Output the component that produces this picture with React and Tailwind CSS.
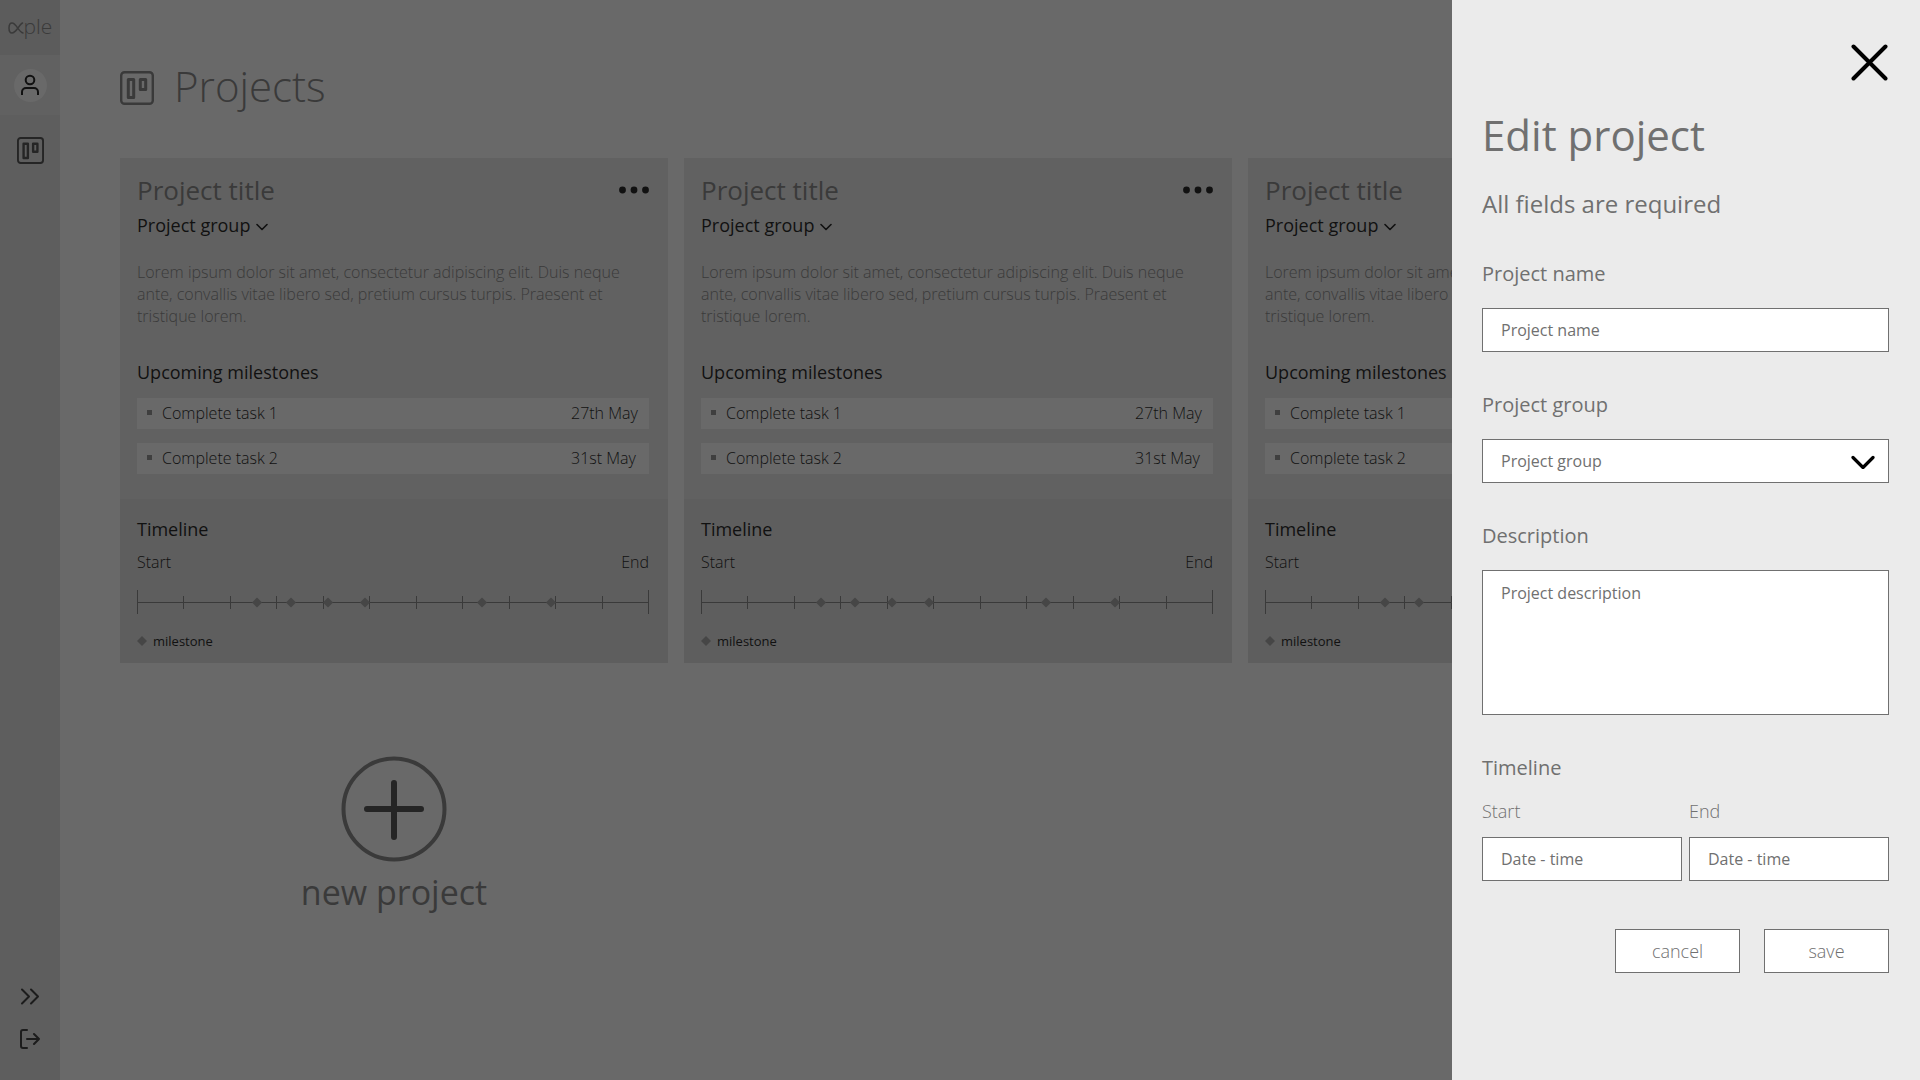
import React from "react";

const MILESTONES = [
  { task: "Complete task 1", date: "27th May" },
  { task: "Complete task 2", date: "31st May" },
];

const TICKS = [47, 94, 140, 187, 233, 280, 326, 373, 419, 466];
const POINTS = [120, 154, 191, 228, 345, 414];

function BoardIcon({ className }) {
  return (
    <svg viewBox="0 0 34 34" className={className} fill="none" stroke="currentColor" strokeLinejoin="round" aria-hidden="true">
      <rect x="1.200" y="1.200" width="31.600" height="31.600" rx="3.400" strokeWidth="2.400" />
      <rect x="8.300" y="8.500" width="5.400" height="18" strokeWidth="3" />
      <rect x="20.300" y="8.500" width="5.400" height="10" strokeWidth="3" />
    </svg>
  );
}

function Logo() {
  return (
    <a href="#home" aria-label="xple" className="flex h-[55px] items-center justify-center bg-[#5c5c5c] pb-1 text-[#3a3a3a]">
      <svg viewBox="0 0 16 12" className="mt-1 h-3 w-4 shrink-0" fill="none" stroke="currentColor" strokeWidth="1.500" strokeLinecap="round" aria-hidden="true">
        <path d="M14.500 1C11 2.500 8.500 11 4 11C2 11 1 9.200 1 6C1 2.800 2 1 4 1C8.500 1 10.500 10.400 15 11" />
      </svg>
      <span className="text-[21px] leading-7 font-light">ple</span>
    </a>
  );
}

function Sidebar() {
  return (
    <nav className="flex w-[60px] shrink-0 flex-col bg-[#5e5e5e]">
      <Logo />
      <div className="flex h-[60px] items-center justify-center bg-[#616161]">
        <button aria-label="Profile" className="flex size-[33px] items-center justify-center rounded-full bg-[#696969] text-[#111111]">
          <svg viewBox="0 0 20 22" className="h-[22px] w-5" fill="none" stroke="currentColor" strokeWidth="2" aria-hidden="true">
            <circle cx="10" cy="6" r="4.300" />
            <path d="M2 21v-3a4 4 0 0 1 4-4h8a4 4 0 0 1 4 4v3" />
          </svg>
        </button>
      </div>
      <a href="#projects" aria-label="Projects" className="mt-[22px] flex justify-center text-[#252525]">
        <BoardIcon className="size-[27px]" />
      </a>
      <div className="mt-auto mb-[31px] flex flex-col items-center gap-6 text-[#1c1c1c]">
        <button aria-label="Expand">
          <svg viewBox="0 0 20 17" className="h-[17px] w-5" fill="none" stroke="currentColor" strokeWidth="2" strokeLinecap="round" strokeLinejoin="round" aria-hidden="true">
            <path d="M2 1.500l7 7-7 7M11 1.500l7 7-7 7" />
          </svg>
        </button>
        <button aria-label="Log out">
          <svg viewBox="0 0 20 20" className="size-5" fill="none" stroke="currentColor" strokeWidth="2" strokeLinecap="round" strokeLinejoin="round" aria-hidden="true">
            <path d="M7 1H3a2 2 0 0 0-2 2v14a2 2 0 0 0 2 2h4M7 10h12M14 5l5 5-5 5" />
          </svg>
        </button>
      </div>
    </nav>
  );
}

function TimelineChart() {
  return (
    <svg viewBox="0 0 512 24" className="mt-[17px] block w-full overflow-visible text-[#3a3a3a]" role="img" aria-label="Project timeline">
      <g fill="none" stroke="currentColor" strokeWidth="1" shapeRendering="crispEdges">
        <path d="M0 12.500H512M0.500 0V24M511.500 0V24" />
        {TICKS.map((x) => (
          <path key={x} d={`M${x - 0.5} 6V19`} />
        ))}
      </g>
      {POINTS.map((x) => (
        <path key={x} d={`M${x} 7.500l5 5-5 5-5-5z`} fill="#464646" />
      ))}
    </svg>
  );
}

function ProjectCard() {
  return (
    <article className="bg-[#616161] text-[#111111]">
      <div className="pt-3 pr-[19px] pb-[25px] pl-[17px]">
        <div className="flex items-center justify-between">
          <h2 className="text-[26px] leading-10 text-[#3a3a3a]">Project title</h2>
          <button aria-label="Project options">
            <svg viewBox="0 0 30 8" className="h-2 w-[30px]" fill="currentColor" aria-hidden="true">
              <circle cx="3.500" cy="4" r="3.400" />
              <circle cx="15" cy="4" r="3.400" />
              <circle cx="26.500" cy="4" r="3.400" />
            </svg>
          </button>
        </div>
        <button className="mt-[3px] flex items-center gap-1.5 text-lg leading-6">
          Project group
          <svg viewBox="0 0 12 8" className="mt-1 h-2 w-3" fill="none" stroke="currentColor" strokeWidth="1.600" strokeLinecap="round" strokeLinejoin="round" aria-hidden="true">
            <path d="M1 1.500l5 5 5-5" />
          </svg>
        </button>
        <p className="mt-6 text-base leading-[22px] font-light text-[#3a3a3a]">
          Lorem ipsum dolor sit amet, consectetur adipiscing elit. Duis neque ante, convallis vitae libero sed, pretium cursus turpis. Praesent et tristique lorem.
        </p>
        <h3 className="mt-[33px] text-lg leading-6">Upcoming milestones</h3>
        <ul className="mt-3.5 flex flex-col gap-3.5">
          {MILESTONES.map((m) => (
            <li key={m.task} className="flex h-[31px] items-center bg-[#696969] pb-0.5 pl-2.5 text-base leading-[22px] font-light">
              <span className="mr-2.5 size-[5px] bg-[#3f3f3f]" />
              <span className="flex-1">{m.task}</span>
              <span className="w-[78px] whitespace-nowrap">{m.date}</span>
            </li>
          ))}
        </ul>
      </div>
      <div className="bg-[#5e5e5e] pt-[18px] pr-[19px] pb-[11px] pl-[17px]">
        <h3 className="text-lg leading-6">Timeline</h3>
        <div className="mt-2.5 flex justify-between text-base leading-[22px] font-light">
          <span>Start</span>
          <span>End</span>
        </div>
        <TimelineChart />
        <div className="mt-4 flex items-center gap-1.5 text-[13px] leading-[22px]">
          <svg viewBox="0 0 10 10" className="size-2.5 text-[#464646]" fill="currentColor" aria-hidden="true">
            <path d="M5 0l5 5-5 5-5-5z" />
          </svg>
          milestone
        </div>
      </div>
    </article>
  );
}

const FIELD = "block w-full rounded-none border border-[#707070] bg-white px-[18px] text-base text-[#707070] outline-none placeholder:text-[#707070] placeholder:opacity-100";

function EditPanel() {
  return (
    <aside className="fixed inset-y-0 right-0 w-[468px] max-w-full overflow-y-auto bg-[#ebebeb] pt-11 pr-[31px] pl-[30px] text-[#707070]" aria-labelledby="edit-title">
      <button aria-label="Close" className="mr-px ml-auto block text-black">
        <svg viewBox="0 0 37 37" className="size-[37px]" fill="none" stroke="currentColor" strokeWidth="4" strokeLinecap="round" aria-hidden="true">
          <path d="M2.500 2.500l32 32M34.500 2.500l-32 32" />
        </svg>
      </button>
      <h2 id="edit-title" className="mt-[26px] text-[42px] leading-14">Edit project</h2>
      <p className="mt-[25px] text-2xl leading-8">All fields are required</p>
      <form onSubmit={(e) => e.preventDefault()}>
        <label htmlFor="name" className="mt-10 block text-xl leading-7">Project name</label>
        <input id="name" type="text" placeholder="Project name" className={`${FIELD} mt-5 h-11`} />
        <label htmlFor="group" className="mt-[39px] block text-xl leading-7">Project group</label>
        <div className="relative mt-5">
          <select id="group" className={`${FIELD} h-11 appearance-none`}>
            <option>Project group</option>
          </select>
          <svg viewBox="0 0 24 14" className="pointer-events-none absolute top-4 right-3.5 h-3.5 w-6 text-black" fill="none" stroke="currentColor" strokeWidth="3.200" strokeLinecap="round" strokeLinejoin="round" aria-hidden="true">
            <path d="M2 2.500l10 10L22 2.500" />
          </svg>
        </div>
        <label htmlFor="description" className="mt-[39px] block text-xl leading-7">Description</label>
        <textarea id="description" placeholder="Project description" className={`${FIELD} mt-5 h-[145px] resize-none py-[11px] leading-[22px]`} />
        <fieldset className="mt-[39px]">
          <legend className="text-xl leading-7">Timeline</legend>
          <div className="mt-[17px] grid grid-cols-2 gap-[7px]">
            <div>
              <label htmlFor="start" className="block text-lg leading-6 font-light">Start</label>
              <input id="start" type="text" placeholder="Date - time" className={`${FIELD} mt-3.5 h-11`} />
            </div>
            <div>
              <label htmlFor="end" className="block text-lg leading-6 font-light">End</label>
              <input id="end" type="text" placeholder="Date - time" className={`${FIELD} mt-3.5 h-11`} />
            </div>
          </div>
        </fieldset>
        <div className="mt-12 flex justify-end gap-6">
          <button type="button" className="h-11 w-[125px] border border-[#707070] bg-white text-lg font-light">cancel</button>
          <button type="submit" className="h-11 w-[125px] border border-[#707070] bg-white text-lg font-light">save</button>
        </div>
      </form>
    </aside>
  );
}

export default function App() {
  return (
    <div className="flex min-h-screen bg-[#696969] font-['Open_Sans','Noto_Sans',sans-serif]">
      <Sidebar />
      <main className="min-w-0 flex-1 px-[60px] pt-[58px]">
        <header className="flex items-center gap-5 text-[#3a3a3a]">
          <BoardIcon className="mt-1 size-[34px]" />
          <h1 className="text-[42px] leading-14 font-light">Projects</h1>
        </header>
        <div className="mt-11 grid grid-cols-[repeat(auto-fill,548px)] gap-4">
          <ProjectCard />
          <ProjectCard />
          <ProjectCard />
          <div className="flex justify-center pt-[77px]">
            <button className="flex flex-col items-center text-[#3a3a3a]">
              <svg viewBox="0 0 106 106" className="size-[106px]" fill="none" strokeLinecap="round" aria-hidden="true">
                <circle cx="53" cy="53" r="50.500" stroke="#3a3a3a" strokeWidth="4" />
                <path d="M53 27v54M26 53h54" stroke="#252525" strokeWidth="6" />
              </svg>
              <span className="mt-2 text-[34px] leading-[44px]">new project</span>
            </button>
          </div>
        </div>
      </main>
      <EditPanel />
    </div>
  );
}
